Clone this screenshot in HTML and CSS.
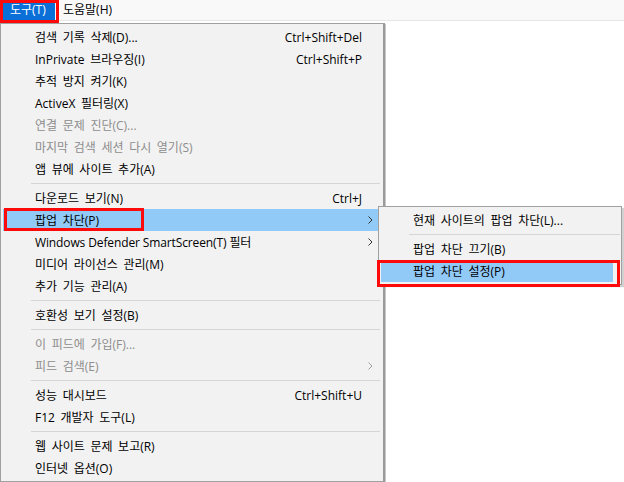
FILE: index.html
```html
<!DOCTYPE html>
<html lang="ko">
<head>
<meta charset="utf-8">
<link rel="stylesheet" href="styles.css">
</head>
<body>
<div class="screen">
  <div class="menubar">
    <span class="mb-item active">도구(T)</span>
    <span class="mb-item">도움말(H)</span>
  </div>
  <div class="page">
    <span class="mark m1"></span><span class="mark m2"></span><span class="mark m3"></span><span class="mark m4"></span><span class="mark m5"></span><span class="mark m6"></span>
  </div>

  <div class="menu main">
    <div class="item"><span class="label">검색 기록 삭제(D)...</span><span class="key">Ctrl+Shift+Del</span><span class="arr"></span></div>
    <div class="item"><span class="label">InPrivate 브라우징(I)</span><span class="key">Ctrl+Shift+P</span><span class="arr"></span></div>
    <div class="item"><span class="label">추적 방지 켜기(K)</span><span class="key"></span><span class="arr"></span></div>
    <div class="item"><span class="label">ActiveX 필터링(X)</span><span class="key"></span><span class="arr"></span></div>
    <div class="item disabled"><span class="label">연결 문제 진단(C)...</span><span class="key"></span><span class="arr"></span></div>
    <div class="item disabled"><span class="label">마지막 검색 세션 다시 열기(S)</span><span class="key"></span><span class="arr"></span></div>
    <div class="item"><span class="label">앱 뷰에 사이트 추가(A)</span><span class="key"></span><span class="arr"></span></div>
    <div class="sep"></div>
    <div class="item"><span class="label">다운로드 보기(N)</span><span class="key">Ctrl+J</span><span class="arr"></span></div>
    <div class="item hl"><span class="label">팝업 차단(P)</span><span class="key"></span><span class="arr"><svg width="5" height="8" viewBox="0 0 5 8"><path d="M0.5 0.5 L4 4 L0.5 7.5" fill="none" stroke="#333" stroke-width="1"/></svg></span></div>
    <div class="item"><span class="label latin">Windows Defender SmartScreen(T) 필터</span><span class="key"></span><span class="arr"><svg width="5" height="8" viewBox="0 0 5 8"><path d="M0.5 0.5 L4 4 L0.5 7.5" fill="none" stroke="#333" stroke-width="1"/></svg></span></div>
    <div class="item"><span class="label">미디어 라이선스 관리(M)</span><span class="key"></span><span class="arr"></span></div>
    <div class="item"><span class="label">추가 기능 관리(A)</span><span class="key"></span><span class="arr"></span></div>
    <div class="sep"></div>
    <div class="item"><span class="label">호환성 보기 설정(B)</span><span class="key"></span><span class="arr"></span></div>
    <div class="sep"></div>
    <div class="item disabled"><span class="label">이 피드에 가입(F)...</span><span class="key"></span><span class="arr"></span></div>
    <div class="item disabled"><span class="label">피드 검색(E)</span><span class="key"></span><span class="arr"><svg width="5" height="8" viewBox="0 0 5 8"><path d="M0.5 0.5 L4 4 L0.5 7.5" fill="none" stroke="#a0a0a0" stroke-width="1"/></svg></span></div>
    <div class="sep"></div>
    <div class="item"><span class="label">성능 대시보드</span><span class="key">Ctrl+Shift+U</span><span class="arr"></span></div>
    <div class="item"><span class="label">F12 개발자 도구(L)</span><span class="key"></span><span class="arr"></span></div>
    <div class="sep"></div>
    <div class="item"><span class="label">웹 사이트 문제 보고(R)</span><span class="key"></span><span class="arr"></span></div>
    <div class="item"><span class="label">인터넷 옵션(O)</span><span class="key"></span><span class="arr"></span></div>
  </div>

  <div class="menu sub">
    <div class="item"><span class="label">현재 사이트의 팝업 차단(L)...</span></div>
    <div class="sep"></div>
    <div class="item"><span class="label">팝업 차단 끄기(B)</span></div>
    <div class="item hl"><span class="label">팝업 차단 설정(P)</span></div>
  </div>

  <div class="redbox rb1"></div>
  <div class="redbox rb2"></div>
  <div class="redbox rb3"></div>
</div>
</body>
</html>
```

FILE: styles.css
```css
* { box-sizing: border-box; }
html, body { margin: 0; padding: 0; background: #ffffff; }
body {
  font-family: "Open Sans", "Noto Sans CJK KR", sans-serif;
  font-size: 12px;
  color: #000;
}
.screen {
  position: relative;
  width: 624px;
  height: 482px;
  overflow: hidden;
}
.menubar {
  height: 21px;
  background: #f9f9f9;
  border-bottom: 1px solid #e6e6e6;
  display: flex;
  align-items: center;
  padding-left: 3px;
}
.mb-item {
  height: 20px;
  line-height: 20px;
  padding: 0 7px;
}
.mb-item.active {
  background: #0a6fd6;
  color: #fff;
  width: 52px;
}
.mb-item + .mb-item { padding-left: 8px; }

.page { position: relative; height: 461px; }
.mark { position: absolute; left: 384px; width: 2px; }
.m1 { top: 8px; height: 6px; background: #2a5aa8; }
.m2 { top: 112px; height: 9px; background: #b0314a; }
.m3 { top: 132px; height: 7px; background: #b0314a; }
.m4 { top: 153px; height: 7px; background: #b0314a; }
.m5 { top: 272px; height: 4px; background: #2a4a80; }
.m6 { top: 285px; height: 4px; background: #2a4a80; }

.menu {
  position: absolute;
  background: #f2f2f2;
  border: 1px solid #a0a0a0;
  padding: 2px 0;
  box-shadow: 1px 1px 0 #c8c8c8;
}
.menu.main {
  left: 0;
  top: 23px;
  width: 385px;
  height: 459px;
  border-right: 2px solid #9a9a9a;
}
.menu.sub {
  left: 378px;
  top: 206px;
  width: 244px;
  height: 79px;
  box-shadow: 2px 2px 1px rgba(0,0,0,0.18);
}
.item {
  height: 22px;
  display: grid;
  grid-template-columns: 1fr auto 16px;
  align-items: center;
  margin: 0 5px 0 2px;
  padding-left: 32px;
  white-space: nowrap;
}
.label { word-spacing: 2.5px; }
.label.latin { word-spacing: 0; letter-spacing: -0.12px; }
.sub .item {
  grid-template-columns: 1fr;
  margin: 0 8px 0 2px;
}
.item.hl { background: #91c9f7; }
.item.disabled { color: #8d8d8d; }
.arr { display: flex; align-items: center; padding-left: 6px; }
.arr svg { display: block; }
.sep {
  height: 7px;
  margin: 0 3px 0 30px;
  position: relative;
}
.sep::after {
  content: "";
  position: absolute;
  left: 0; right: 0; top: 3px;
  height: 1px;
  background: #d5d5d5;
}
.sub .sep { margin: 0 1px 0 30px; }

.redbox {
  position: absolute;
  border: 3px solid #ff0a0a;
  pointer-events: none;
}
.rb1 { left: 0; top: 0; width: 59px; height: 23px; }
.rb2 { left: 4px; top: 208px; width: 140px; height: 23px; }
.rb3 { left: 377px; top: 260px; width: 243px; height: 27px; }
```
